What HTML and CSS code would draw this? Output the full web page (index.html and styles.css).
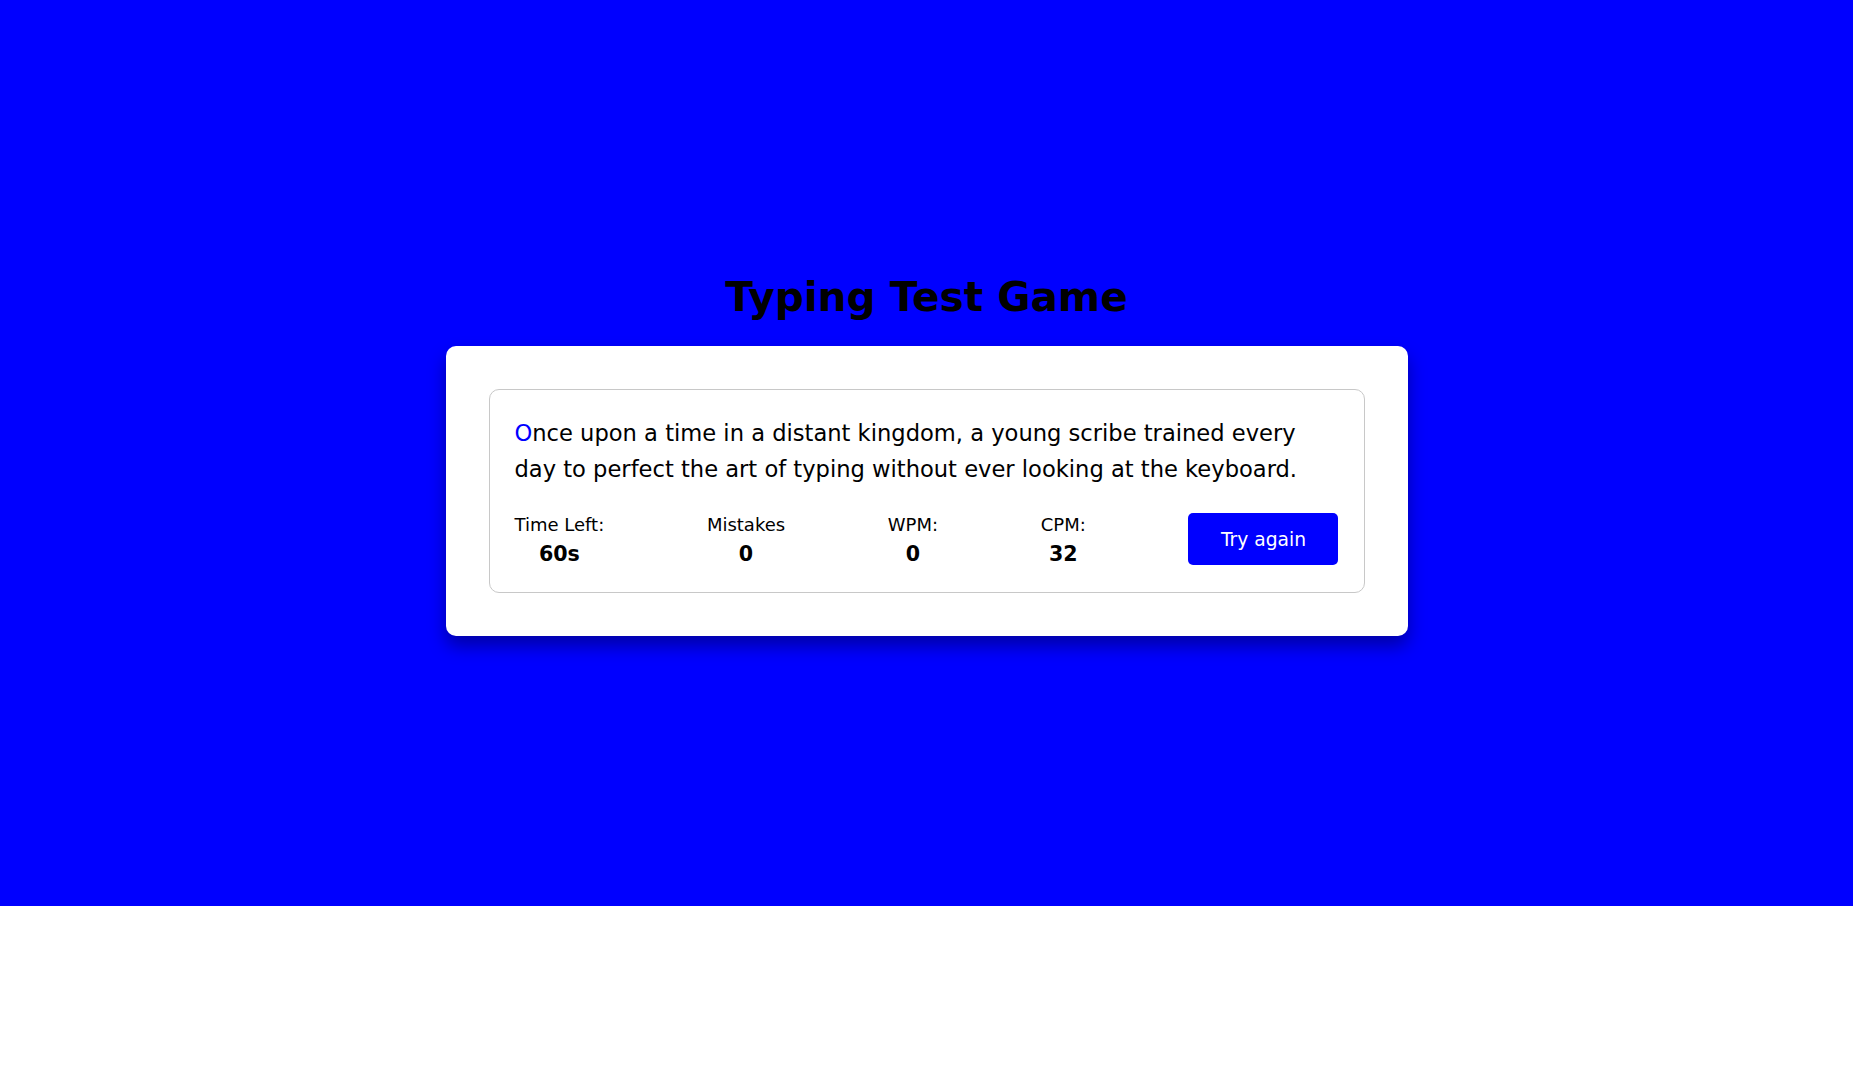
FILE: index.html
```html
<!DOCTYPE html>
<html lang="en">
<head>
<meta charset="utf-8">
<title>Typing Test Game</title>
<link rel="stylesheet" href="styles.css">
</head>
<body>
<main class="page">
  <h1 class="title">Typing Test Game</h1>
  <section class="card">
    <div class="content-box">
      <p class="typing-text"><span class="active">O</span>nce upon a time in a distant kingdom, a young scribe trained every day to perfect the art of typing without ever looking at the keyboard.</p>
      <div class="stats">
        <div class="stat">
          <span class="stat-label">Time Left:</span>
          <b class="stat-value">60s</b>
        </div>
        <div class="stat">
          <span class="stat-label">Mistakes</span>
          <b class="stat-value">0</b>
        </div>
        <div class="stat">
          <span class="stat-label">WPM:</span>
          <b class="stat-value">0</b>
        </div>
        <div class="stat">
          <span class="stat-label">CPM:</span>
          <b class="stat-value">32</b>
        </div>
        <button class="retry">Try again</button>
      </div>
    </div>
  </section>
</main>
</body>
</html>
```

FILE: styles.css
```css
* {
  box-sizing: border-box;
}

body {
  margin: 0;
  font-family: "DejaVu Sans", Verdana, sans-serif;
  color: #000;
  background: #fff;
}

.page {
  min-height: 906px;
  padding-top: 2px;
  background: #0000ff;
  display: flex;
  flex-direction: column;
  align-items: center;
  justify-content: center;
}

.title {
  margin: 0 0 25px;
  font-size: 40.6px;
  font-weight: bold;
  line-height: normal;
}

.card {
  width: 962px;
  padding: 43px;
  background: #fff;
  border-radius: 10px;
  box-shadow: 0 10px 18px rgba(0, 0, 0, 0.35);
}

.content-box {
  border: 1px solid #c8c8c8;
  border-radius: 10px;
  padding: 25px;
}

.typing-text {
  margin: 0 0 24px;
  font-size: 22.6px;
  line-height: 36.5px;
}

.active {
  color: #0000ff;
}

.stats {
  display: flex;
  justify-content: space-between;
  align-items: center;
}

.stat {
  display: flex;
  flex-direction: column;
  align-items: center;
  padding-top: 2px;
}

.stat-label {
  font-size: 18px;
  line-height: 22px;
}

.stat-value {
  margin-top: 5px;
  font-size: 20.6px;
  line-height: 26px;
  font-weight: bold;
}

.retry {
  width: 150px;
  height: 52px;
  border: none;
  border-radius: 5px;
  background: #0000ff;
  color: #fff;
  font-family: "DejaVu Sans", Verdana, sans-serif;
  font-size: 18.7px;
  cursor: pointer;
}
```
